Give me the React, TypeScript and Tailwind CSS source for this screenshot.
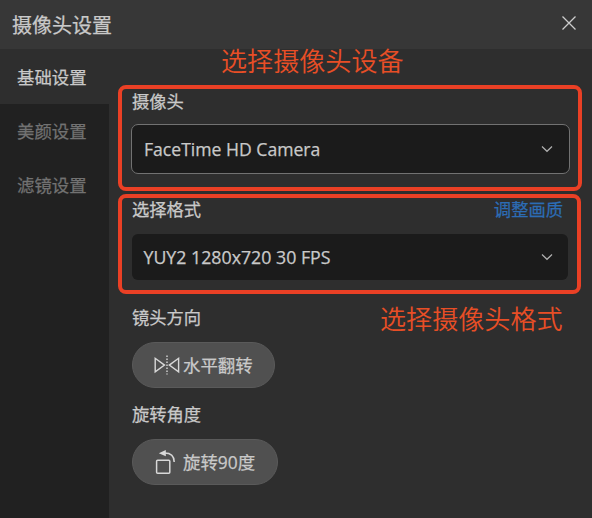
import type { ReactNode } from "react";

const tabs = ["基础设置", "美颜设置", "滤镜设置"];

function Chevron() {
  return (
    <svg width="12" height="8" viewBox="0 0 12 8" fill="none" stroke="#b0b0b0" strokeWidth="1.2">
      <path d="M1 1.500 6 6.300 11 1.500" />
    </svg>
  );
}

function Label({ children }: { children: ReactNode }) {
  return <div className="h-6 text-[17.3px] leading-6 whitespace-nowrap">{children}</div>;
}

function FlipIcon() {
  return (
    <svg width="26" height="20" viewBox="0 0 26 20" fill="none" stroke="#d8d8d8" strokeWidth="1.4">
      <path d="M1.200 3.300v13.600l9.300-6.800zM24.600 3.300v13.600l-9.300-6.800z" />
      <path d="M13 .5v19" strokeDasharray="1.6 1.4" />
    </svg>
  );
}

function RotateIcon() {
  return (
    <svg width="22" height="26" viewBox="0 0 22 26" fill="none" stroke="#d8d8d8" strokeWidth="1.5">
      <rect x="1.600" y="11.200" width="13.200" height="13" rx="1" />
      <path d="M9.500 4.100c5.800 0 9.700 2.900 9.700 9" />
      <path d="M3.800 4.200 10.800 1v6.200z" fill="#d8d8d8" stroke="none" />
    </svg>
  );
}

export default function App() {
  return (
    <div className="relative flex h-[518px] w-[592px] flex-col overflow-hidden bg-[#2e2e2e] font-['Open_Sans','Noto_Sans_CJK_SC',sans-serif] text-[#c9c9c9] [-webkit-text-stroke:0.25px_currentColor]">
      <header className="flex h-[49px] shrink-0 items-center justify-between bg-[#373737] pr-4 pl-3">
        <h1 className="mt-[2px] text-[20px] leading-7">摄像头设置</h1>
        <svg width="14" height="14" viewBox="0 0 14 14" stroke="#cdcdcd" strokeWidth="1.3" className="mb-[3px]">
          <path d="M.5.5l13 13M13.500.5l-13 13" />
        </svg>
      </header>
      <div className="flex grow">
        <nav className="flex w-[109px] shrink-0 flex-col bg-[#212121] text-[17.4px]">
          {tabs.map((tab, i) => (
            <button
              key={tab}
              className={
                i === 0
                  ? "flex h-[55px] items-center bg-[#2e2e2e] pt-[2px] pl-[17px] whitespace-nowrap"
                  : "flex h-[54px] items-center pt-px pl-[17px] whitespace-nowrap text-[#727272]"
              }
            >
              {tab}
            </button>
          ))}
        </nav>
        <main className="flex grow flex-col pt-[41px] pr-[22px] pl-[22px]">
          <div className="pl-px">
            <Label>摄像头</Label>
          </div>
          <div className="mt-[10px] flex h-[50px] items-center justify-between rounded-[7px] border-[1.5px] border-[#727272] bg-[#1b1b1b] pr-4 pl-3 text-[17.6px]">
            <span>FaceTime HD Camera</span>
            <Chevron />
          </div>
          <div className="mt-6 flex justify-between pr-[7px] pl-px">
            <Label>选择格式</Label>
            <a className="text-[17.3px] leading-6 text-[#2c6cb5]">调整画质</a>
          </div>
          <div className="mt-3 mr-[2px] ml-px flex h-[46px] items-center justify-between rounded-[6px] bg-[#1b1b1b] pr-[15px] pl-[11.500px] text-[17.75px]">
            <span>YUY2 1280x720 30 FPS</span>
            <Chevron />
          </div>
          <div className="mt-[26px] pl-px">
            <Label>镜头方向</Label>
          </div>
          <button className="mt-3 ml-px flex h-[46px] w-[143px] items-center gap-[3px] rounded-full border border-[#5a5a5a] bg-[#505050] pl-[21px] text-[17.4px] whitespace-nowrap">
            <FlipIcon />
            水平翻转
          </button>
          <div className="mt-[15px] pl-px">
            <Label>旋转角度</Label>
          </div>
          <button className="mt-3 ml-px flex h-[46px] w-[146px] items-center gap-[6px] rounded-full border border-[#5a5a5a] bg-[#505050] pl-[22px] text-[17.4px] whitespace-nowrap">
            <RotateIcon />
            旋转90度
          </button>
        </main>
      </div>
      <div className="absolute top-[85px] left-[118px] h-[106px] w-[464px] rounded-[8px] border-4 border-[#ea4025]" />
      <div className="absolute top-[194px] left-[118px] h-[100px] w-[463px] rounded-[8px] border-4 border-[#ea4025]" />
      <div className="absolute top-[43px] left-[221px] text-[26.1px] leading-9 font-[350] whitespace-nowrap text-[#e84e26] [-webkit-text-stroke:0px]">选择摄像头设备</div>
      <div className="absolute top-[301px] left-[380px] text-[26.1px] leading-9 font-[350] whitespace-nowrap text-[#e84e26] [-webkit-text-stroke:0px]">选择摄像头格式</div>
    </div>
  );
}
